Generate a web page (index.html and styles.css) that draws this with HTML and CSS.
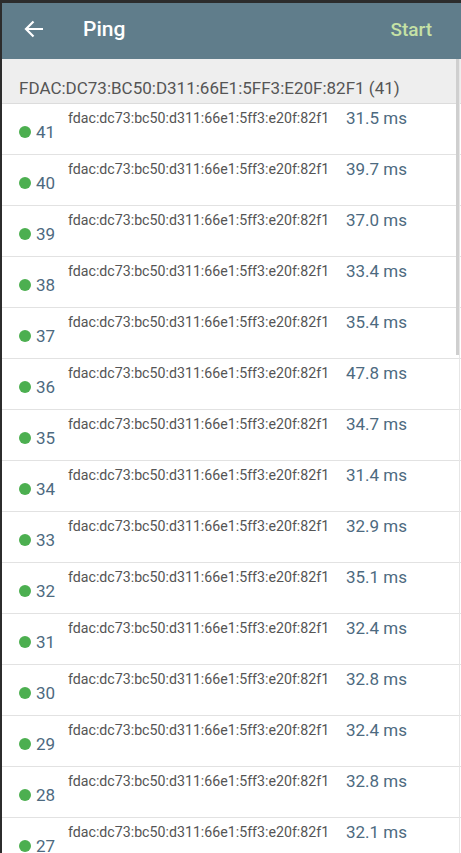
FILE: index.html
```html
<!DOCTYPE html>
<html>
<head>
<meta charset="utf-8">
<link rel="stylesheet" href="styles.css">
</head>
<body>
<div class="screen">
  <header class="appbar">
    <svg class="back" width="20" height="18" viewBox="0 0 20 18"><path d="M19 9H2M9.5 1.5L2 9l7.5 7.5" fill="none" stroke="#fff" stroke-width="2.2"/></svg>
    <span class="title">Ping</span>
    <span class="start">Start</span>
  </header>
  <main class="content">
    <div class="section">FDAC:DC73:BC50:D311:66E1:5FF3:E20F:82F1 (41)</div>
    <ul class="list">
      <li class="row"><span class="seq"><i class="dot"></i>41</span><span class="ip">fdac:dc73:bc50:d311:66e1:5ff3:e20f:82f1</span><span class="ms">31.5 ms</span></li>
      <li class="row"><span class="seq"><i class="dot"></i>40</span><span class="ip">fdac:dc73:bc50:d311:66e1:5ff3:e20f:82f1</span><span class="ms">39.7 ms</span></li>
      <li class="row"><span class="seq"><i class="dot"></i>39</span><span class="ip">fdac:dc73:bc50:d311:66e1:5ff3:e20f:82f1</span><span class="ms">37.0 ms</span></li>
      <li class="row"><span class="seq"><i class="dot"></i>38</span><span class="ip">fdac:dc73:bc50:d311:66e1:5ff3:e20f:82f1</span><span class="ms">33.4 ms</span></li>
      <li class="row"><span class="seq"><i class="dot"></i>37</span><span class="ip">fdac:dc73:bc50:d311:66e1:5ff3:e20f:82f1</span><span class="ms">35.4 ms</span></li>
      <li class="row"><span class="seq"><i class="dot"></i>36</span><span class="ip">fdac:dc73:bc50:d311:66e1:5ff3:e20f:82f1</span><span class="ms">47.8 ms</span></li>
      <li class="row"><span class="seq"><i class="dot"></i>35</span><span class="ip">fdac:dc73:bc50:d311:66e1:5ff3:e20f:82f1</span><span class="ms">34.7 ms</span></li>
      <li class="row"><span class="seq"><i class="dot"></i>34</span><span class="ip">fdac:dc73:bc50:d311:66e1:5ff3:e20f:82f1</span><span class="ms">31.4 ms</span></li>
      <li class="row"><span class="seq"><i class="dot"></i>33</span><span class="ip">fdac:dc73:bc50:d311:66e1:5ff3:e20f:82f1</span><span class="ms">32.9 ms</span></li>
      <li class="row"><span class="seq"><i class="dot"></i>32</span><span class="ip">fdac:dc73:bc50:d311:66e1:5ff3:e20f:82f1</span><span class="ms">35.1 ms</span></li>
      <li class="row"><span class="seq"><i class="dot"></i>31</span><span class="ip">fdac:dc73:bc50:d311:66e1:5ff3:e20f:82f1</span><span class="ms">32.4 ms</span></li>
      <li class="row"><span class="seq"><i class="dot"></i>30</span><span class="ip">fdac:dc73:bc50:d311:66e1:5ff3:e20f:82f1</span><span class="ms">32.8 ms</span></li>
      <li class="row"><span class="seq"><i class="dot"></i>29</span><span class="ip">fdac:dc73:bc50:d311:66e1:5ff3:e20f:82f1</span><span class="ms">32.4 ms</span></li>
      <li class="row"><span class="seq"><i class="dot"></i>28</span><span class="ip">fdac:dc73:bc50:d311:66e1:5ff3:e20f:82f1</span><span class="ms">32.8 ms</span></li>
      <li class="row"><span class="seq"><i class="dot"></i>27</span><span class="ip">fdac:dc73:bc50:d311:66e1:5ff3:e20f:82f1</span><span class="ms">32.1 ms</span></li>
    </ul>
    <div class="scroll-track"><div class="scroll-thumb"></div></div>
  </main>
</div>
</body>
</html>
```

FILE: styles.css
```css
html, body {
  margin: 0;
  padding: 0;
  height: 100%;
  overflow: hidden;
  background: #fff;
  font-family: Roboto, "Noto Sans", sans-serif;
}
.screen {
  height: 853px;
  box-sizing: border-box;
  border-top: 3px solid #2c2c2c;
  border-left: 2px solid #2c2c2c;
  display: flex;
  flex-direction: column;
}
.appbar {
  height: 56px;
  flex: none;
  box-sizing: border-box;
  background: #607d8b;
  display: flex;
  align-items: center;
  padding: 0 29px 4px 22px;
}
.back {
  margin-right: 39px;
  margin-top: -1px;
}
.title {
  color: #fff;
  font-size: 21px;
  font-weight: 500;
  flex: 1;
}
.start {
  color: #c5e1a5;
  font-size: 19px;
  font-weight: 500;
  padding-top: 1px;
}
.content {
  position: relative;
  flex: 1;
  overflow: hidden;
}
.section {
  height: 45px;
  box-sizing: border-box;
  background: #eeeeee;
  color: #555;
  font-size: 17px;
  padding: 19px 0 0 17px;
  border-bottom: 1px solid #dcdcdc;
}
.list {
  list-style: none;
  margin: 0;
  padding: 0;
}
.row {
  height: 51px;
  box-sizing: border-box;
  border-bottom: 1px solid #e2e2e2;
  display: flex;
  align-items: flex-start;
}
.seq {
  width: 66px;
  flex: none;
  box-sizing: border-box;
  padding: 18px 0 0 17px;
  display: flex;
  align-items: center;
  color: #4d6a80;
  font-size: 17px;
}
.dot {
  width: 12px;
  height: 12px;
  border-radius: 50%;
  background: #4caf50;
  margin-right: 5px;
}
.ip {
  width: 278px;
  flex: none;
  padding-top: 6px;
  color: #555;
  font-size: 14.2px;
}
.ms {
  padding-top: 4px;
  color: #4d6a80;
  font-size: 17px;
}
.scroll-track {
  position: absolute;
  top: 0;
  right: 1px;
  width: 3px;
  bottom: 0;
  border-right: 1px solid #e6e6e6;
}
.scroll-thumb {
  height: 296px;
  background: #cfcfcf;
}
```
